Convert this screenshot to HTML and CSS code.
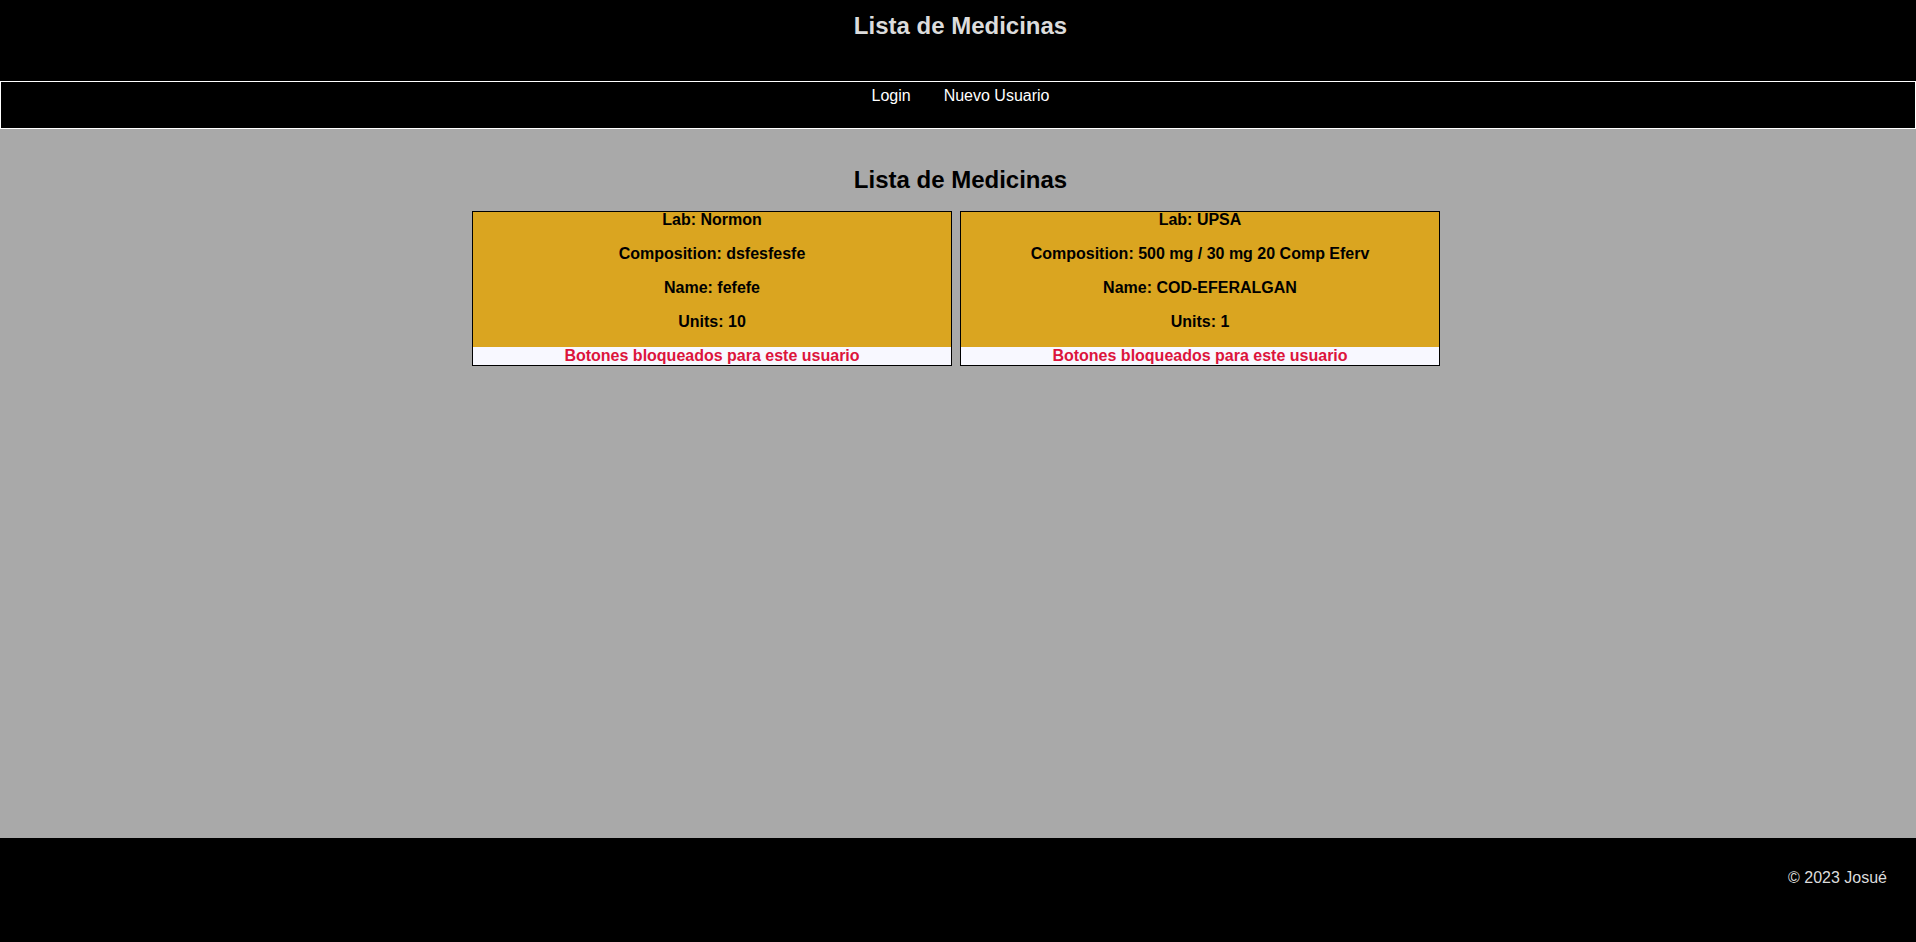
FILE: index.html
```html
<!DOCTYPE html>
<html lang="es">
<head>
<meta charset="utf-8">
<title>Lista de Medicinas</title>
<link rel="stylesheet" href="styles.css">
</head>
<body>
<div class="page">
  <header class="site-header">
    <h2 class="site-title">Lista de Medicinas</h2>
  </header>
  <nav class="site-nav">
    <a href="#" class="nav-link">Login</a>
    <a href="#" class="nav-link">Nuevo Usuario</a>
  </nav>
  <main class="content">
    <h2 class="content-title">Lista de Medicinas</h2>
    <div class="cards">
      <div class="card">
        <div class="card-info">
          <p>Lab: Normon</p>
          <p>Composition: dsfesfesfe</p>
          <p>Name: fefefe</p>
          <p>Units: 10</p>
        </div>
        <div class="card-blocked">Botones bloqueados para este usuario</div>
      </div>
      <div class="card">
        <div class="card-info">
          <p>Lab: UPSA</p>
          <p>Composition: 500 mg / 30 mg 20 Comp Eferv</p>
          <p>Name: COD-EFERALGAN</p>
          <p>Units: 1</p>
        </div>
        <div class="card-blocked">Botones bloqueados para este usuario</div>
      </div>
    </div>
  </main>
  <footer class="site-footer">© 2023 Josué</footer>
</div>
</body>
</html>
```
FILE: styles.css
```css
* { box-sizing: border-box; }
html, body {
  margin: 0;
  padding: 0;
}
body {
  font-family: "Liberation Sans", Arial, sans-serif;
  font-size: 16px;
  background: #000;
}
.page {
  display: flex;
  flex-direction: column;
  min-height: 100vh;
}
.site-header {
  height: 81px;
  background: #000;
  padding: 12px 0 0 5px;
}
.site-title {
  margin: 0;
  text-align: center;
  font-size: 24px;
  font-weight: bold;
  color: #dcdcdc;
}
.site-nav {
  height: 48px;
  border: 1px solid #fff;
  background: #000;
  padding: 5px 0 0 5px;
  display: flex;
  justify-content: center;
  gap: 33px;
}
.nav-link {
  color: #fff;
  text-decoration: none;
  font-size: 16px;
  line-height: 18px;
}
.content {
  flex: 1;
  background: #a9a9a9;
  padding-top: 37px;
}
.content-title {
  margin: 0 0 17px;
  padding-left: 5px;
  text-align: center;
  font-size: 24px;
  color: #000;
}
.cards {
  display: flex;
  justify-content: center;
  gap: 8px;
  padding-right: 4px;
}
.card {
  width: 480px;
  border: 1px solid #000;
  background: #f8f8ff;
  text-align: center;
  font-weight: bold;
}
.card-info {
  background: #daa520;
  padding-bottom: 17px;
}
.card-info p {
  margin: 18px 0 0;
  line-height: 16px;
  color: #000;
}
.card-info p:first-child {
  margin-top: 0;
}
.card-blocked {
  color: #dc143c;
  line-height: 18px;
}
.site-footer {
  height: 104px;
  background: #000;
  color: #dcdcdc;
  text-align: right;
  padding: 31px 29px 0 0;
  line-height: 18px;
}
```
